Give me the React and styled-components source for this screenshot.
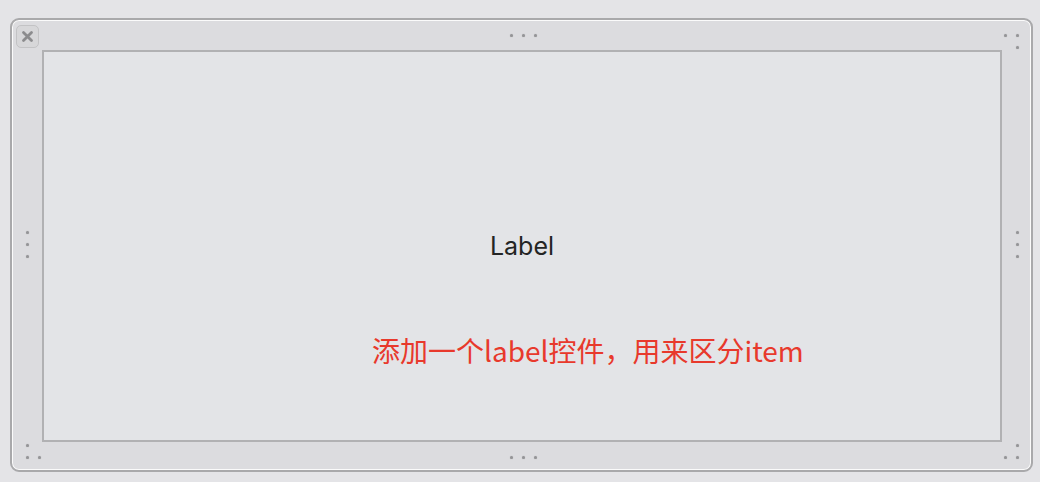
import React from 'react';
import styled, { createGlobalStyle } from 'styled-components';

const GlobalStyle = createGlobalStyle`
  html, body {
    margin: 0;
    padding: 0;
    background: #e4e4e7;
  }
  body {
    font-family: "Noto Sans", "Noto Sans CJK SC", sans-serif;
  }
`;

const Page = styled.div`
  width: 1040px;
  height: 482px;
  box-sizing: border-box;
  padding: 18px 7px 10px 10px;
`;

const Frame = styled.div`
  box-sizing: border-box;
  width: 1023px;
  height: 454px;
  display: grid;
  grid-template-columns: 30px 1fr 29px;
  grid-template-rows: 30px 1fr 28px;
  background: #dcdcdf;
  border: 2px solid #a9a9ab;
  border-radius: 9px;
  box-shadow: inset 0 0 0 1px #fbfbfb;
`;

const Cell = styled.div`
  display: flex;
  flex-direction: column;
  align-items: ${(p) => p.$justify || 'flex-start'};
  justify-content: ${(p) => p.$align || 'flex-start'};
  padding: ${(p) => p.$pad || '0'};
`;

const Canvas = styled.div`
  position: relative;
  box-sizing: border-box;
  border: 2px solid #b1b1b3;
  background: #e3e4e7;
  display: flex;
  align-items: center;
  justify-content: center;
`;

const Label = styled.span`
  font-family: "Inter", "Noto Sans", sans-serif;
  font-size: 25px;
  color: #242424;
`;

const Note = styled.span`
  position: absolute;
  left: 328px;
  top: 278px;
  font-family: "Noto Sans CJK SC", sans-serif;
  font-size: 28px;
  color: #e8392c;
  white-space: nowrap;
`;

const CloseButton = styled.div`
  width: 23px;
  height: 23px;
  box-sizing: border-box;
  border: 1px solid #c3c3c5;
  border-radius: 5px;
  background: #d7d7d9;
  display: flex;
  align-items: center;
  justify-content: center;
`;

const Dot = styled.span`
  width: 3px;
  height: 3px;
  border-radius: 50%;
  background: ${(p) => (p.$hidden ? 'transparent' : '#959597')};
  box-shadow: ${(p) => (p.$hidden ? 'none' : '0 0 1px #a8a8aa')};
`;

const Grip = styled.div`
  display: flex;
  flex-direction: ${(p) => (p.$vertical ? 'column' : 'row')};
  gap: 9px;
`;

const CornerGrip = styled.div`
  display: grid;
  grid-template-columns: 3px 3px;
  grid-auto-rows: 3px;
  gap: 9px;
`;

function Grip3({ vertical }) {
  return (
    <Grip $vertical={vertical}>
      <Dot />
      <Dot />
      <Dot />
    </Grip>
  );
}

function Corner({ empty }) {
  return (
    <CornerGrip>
      {[0, 1, 2, 3].map((i) => (
        <Dot key={i} $hidden={i === empty} />
      ))}
    </CornerGrip>
  );
}

export default function App() {
  return (
    <Page>
      <GlobalStyle />
      <Frame>
        <Cell $pad="5px 0 0 4px">
          <CloseButton>
            <svg width="13" height="13" viewBox="0 0 13 13">
              <path
                d="M2.5 2.5 L10.5 10.5 M10.5 2.5 L2.5 10.5"
                stroke="#8c8c8e"
                strokeWidth="2.8"
                strokeLinecap="round"
              />
            </svg>
          </CloseButton>
        </Cell>
        <Cell $justify="center" $pad="14px 0 0 2px">
          <Grip3 />
        </Cell>
        <Cell $pad="14px 0 0 2px">
          <Corner empty={2} />
        </Cell>

        <Cell $align="center" $pad="0 0 4px 14px">
          <Grip3 vertical />
        </Cell>
        <Canvas>
          <Label>Label</Label>
          <Note>添加一个label控件，用来区分item</Note>
        </Canvas>
        <Cell $align="center" $pad="0 0 4px 14px">
          <Grip3 vertical />
        </Cell>

        <Cell $pad="2px 0 0 14px">
          <Corner empty={1} />
        </Cell>
        <Cell $justify="center" $pad="14px 0 0 2px">
          <Grip3 />
        </Cell>
        <Cell $pad="2px 0 0 2px">
          <Corner empty={0} />
        </Cell>
      </Frame>
    </Page>
  );
}
